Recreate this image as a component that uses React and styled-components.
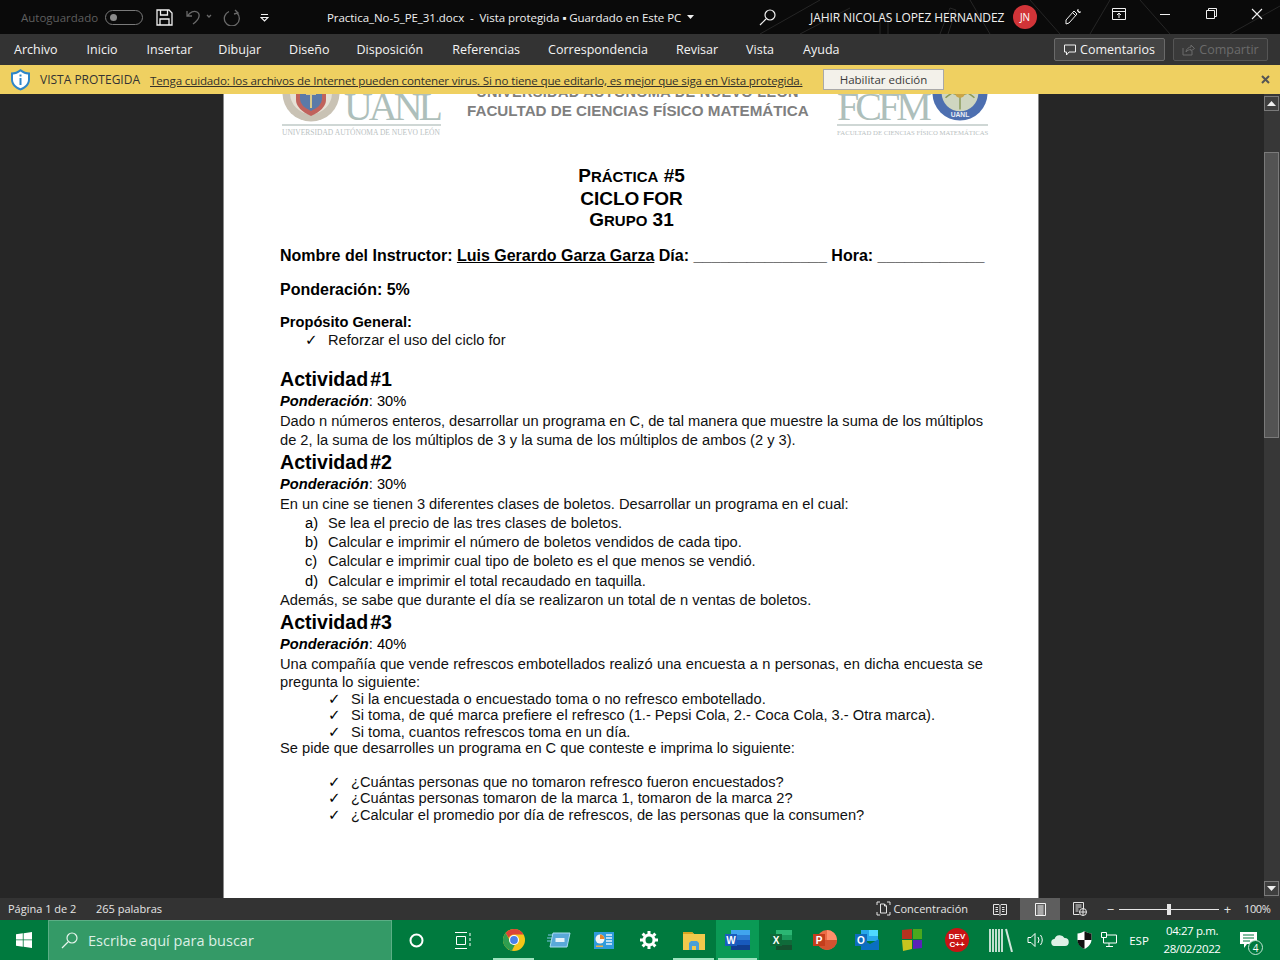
import React from 'react';
import styled, { createGlobalStyle } from 'styled-components';

const Global = createGlobalStyle`
  html, body { margin: 0; padding: 0; background: #262626; }
  body { width: 1280px; height: 960px; overflow: hidden; font-family: "Open Sans", "Liberation Sans", sans-serif; }
  * { box-sizing: border-box; }
`;

const Screen = styled.div`
  width: 1280px;
  height: 960px;
  display: flex;
  flex-direction: column;
`;

/* barra de titulo */
const TitleBar = styled.div`
  position: relative;
  height: 34px;
  flex: none;
  display: flex;
  align-items: center;
  background: #0a0a0a;
  color: #f0f0f0;
  font-size: 11.5px;
  overflow: hidden;
`;
const TitleArt = styled.svg`
  position: absolute;
  right: 0;
  top: 0;
`;
const Quick = styled.div`
  position: relative;
  width: 327px;
  flex: none;
  display: flex;
  align-items: center;
  padding-left: 21px;
`;
const AutoLabel = styled.span`
  width: 84px;
  color: #5f5f5f;
  font-size: 11.5px;
  white-space: nowrap;
`;
const Toggle = styled.span`
  width: 38px;
  height: 15px;
  border: 1px solid #7a7a7a;
  border-radius: 8px;
  display: flex;
  align-items: center;
  padding-left: 4px;
  margin-right: 13px;
  &::before { content: ""; width: 7px; height: 7px; border-radius: 50%; background: #8a8a8a; }
`;
const QuickIcon = styled.span`
  display: flex;
  width: ${p => p.$w}px;
  flex: none;
`;
const DocName = styled.div`
  position: relative;
  width: 432px;
  flex: none;
  display: flex;
  align-items: center;
  gap: 6px;
  white-space: nowrap;
  letter-spacing: -0.05px;
`;
const UserName = styled.span`
  position: relative;
  width: 203px;
  flex: none;
  font-size: 12px;
  letter-spacing: -0.08px;
  white-space: nowrap;
  margin-left: 34px;
`;
const Avatar = styled.span`
  position: relative;
  width: 24px;
  height: 24px;
  flex: none;
  border-radius: 50%;
  background: #d13438;
  color: #fff;
  font-size: 10px;
  display: flex;
  align-items: center;
  justify-content: center;
`;
const WinIcon = styled.span`
  position: relative;
  display: flex;
  justify-content: center;
  flex: none;
  width: 46px;
`;
const WinGroup = styled.div`
  margin-left: 13px;
  display: flex;
  position: relative;
`;

/* pestañas */
const Tabs = styled.div`
  height: 31px;
  flex: none;
  display: flex;
  align-items: center;
  background: #333;
  color: #f3f3f3;
  padding: 0 12px 0 14px;
  font-size: 12.5px;
`;
const Tab = styled.span`
  margin-right: ${p => p.$gap}px;
  white-space: nowrap;
`;
const TabButton = styled.span`
  height: 23px;
  width: ${p => p.$w}px;
  margin-left: ${p => (p.$push ? 'auto' : `${p.$ml || 0}px`)};
  border: 1px solid ${p => (p.$off ? '#555' : '#6a6a6a')};
  border-radius: 2px;
  background: ${p => (p.$off ? '#3a3a3a' : '#444')};
  color: ${p => (p.$off ? '#6b6b6b' : '#f3f3f3')};
  display: flex;
  align-items: center;
  justify-content: center;
  gap: 4px;
  white-space: nowrap;
`;

/* aviso */
const Notice = styled.div`
  height: 29px;
  flex: none;
  display: flex;
  align-items: center;
  background: #efd061;
  color: #333;
  padding-left: 10px;
  font-size: 12px;
`;
const NoticeTitle = styled.span`
  margin-left: 9px;
  width: 110px;
  font-size: 12px;
  white-space: nowrap;
`;
const NoticeLink = styled.span`
  width: 673px;
  padding-top: 1px;
  font-size: 11.6px;
  text-decoration: underline;
  color: #33302a;
  white-space: nowrap;
  letter-spacing: -0.16px;
`;
const EnableButton = styled.span`
  width: 121px;
  height: 21px;
  background: #f3f1ea;
  border: 1px solid #a9a9a9;
  font-size: 11.5px;
  display: flex;
  align-items: center;
  justify-content: center;
  color: #3a3a3a;
`;
const NoticeClose = styled.span`
  margin-left: auto;
  margin-right: 10px;
  display: flex;
`;

/* area del documento */
const Workspace = styled.div`
  flex: 1;
  min-height: 0;
  display: flex;
  background: #262626;
`;
const Canvas = styled.div`
  flex: 1;
  padding-left: 223px;
  overflow: hidden;
`;
const Page = styled.div`
  width: 816px;
  height: 804px;
  background: #fff;
  border-left: 1px solid #8a8a8a;
  border-right: 1px solid #8a8a8a;
  padding-left: 56px;
  overflow: hidden;
  font-family: "Liberation Sans", Arial, sans-serif;
  color: #000;
`;
const Letterhead = styled.div`
  margin-top: -30px;
  height: 74px;
  display: flex;
  width: 708px;
`;
const LogoBlock = styled.div`
  width: ${p => p.$w}px;
  margin-left: ${p => p.$ml}px;
  flex: none;
  display: flex;
  flex-direction: column;
`;
const LogoTop = styled.div`
  height: 58px;
  display: flex;
  align-items: flex-end;
  justify-content: space-between;
`;
const Wordmark = styled.span`
  font-family: "Liberation Serif", serif;
  font-size: 40px;
  line-height: 30px;
  height: 30px;
  letter-spacing: ${p => p.$ls}px;
  margin-right: ${p => p.$mr || 0}px;
  color: #aebfbb;
`;
const LogoRule = styled.div`
  height: 2px;
  margin-top: 2px;
  background: #cfd7d5;
`;
const LogoCaption = styled.div`
  font-family: "Liberation Serif", serif;
  font-size: ${p => p.$size}px;
  line-height: 11px;
  margin-top: 1px;
  color: #b9c1bf;
  white-space: nowrap;
`;
const School = styled.div`
  width: 341px;
  margin-left: 26px;
  flex: none;
  padding-top: 19px;
  text-align: center;
  color: #7f7f7f;
  font-weight: 700;
  font-size: 15.2px;
  line-height: 20px;
  white-space: nowrap;
`;
const SchoolUp = styled.div`
  font-size: 14.5px;
  line-height: 18px;
  letter-spacing: 0.3px;
`;
const TitleBlock = styled.div`
  margin-top: 27px;
  width: 703px;
  text-align: center;
  font-weight: 700;
  font-size: 19px;
  line-height: 21.5px;
`;
const TitleLine = styled.div`
  word-spacing: ${p => p.$ws || 0}px;
`;
const SmallCap = styled.span`
  font-size: 15px;
`;
const InfoLine = styled.div`
  margin-top: ${p => p.$mt}px;
  height: 20px;
  line-height: 20px;
  font-size: 16px;
  font-weight: 700;
  white-space: pre;
`;
const Subhead = styled.div`
  margin-top: 14px;
  height: 17px;
  line-height: 17px;
  font-size: 14.67px;
  font-weight: 700;
`;
const Heading = styled.div`
  margin-top: ${p => p.$mt || 0}px;
  height: 23px;
  line-height: 23px;
  font-size: 19.6px;
  font-weight: 700;
  word-spacing: -3.5px;
`;
const Weight = styled.div`
  height: 21px;
  line-height: 21px;
  font-size: 14.67px;
  & b { font-style: italic; }
`;
const Para = styled.div`
  width: 703px;
  height: ${p => p.$h || 19}px;
  line-height: ${p => p.$h || 19}px;
  font-size: 14.67px;
  color: #111;
  text-align: ${p => (p.$fit ? 'justify' : 'left')};
  text-align-last: ${p => (p.$fit ? 'justify' : 'left')};
  white-space: ${p => (p.$fit ? 'normal' : 'nowrap')};
  word-spacing: ${p => (p.$fit ? '-0.7px' : '0')};
`;
const Item = styled.div`
  display: flex;
  height: ${p => p.$h}px;
  line-height: ${p => p.$h}px;
  padding-left: ${p => p.$indent}px;
  font-size: 14.67px;
  color: #111;
  white-space: nowrap;
`;
const Mark = styled.span`
  width: 23px;
  flex: none;
  font-family: ${p => (p.$check ? '"DejaVu Sans", sans-serif' : 'inherit')};
  font-size: ${p => (p.$check ? '15px' : '14.67px')};
  color: #000;
`;
const Spacer = styled.div`
  height: ${p => p.$h}px;
`;

/* barra de desplazamiento */
const ScrollBar = styled.div`
  width: 16px;
  flex: none;
  background: #373737;
  padding: 2px 1px 2px 0;
  display: flex;
  flex-direction: column;
`;
const ScrollButton = styled.div`
  height: 15px;
  border: 1px solid #7a7a7a;
  background: #3f3f3f;
  display: flex;
  align-items: center;
  justify-content: center;
`;
const ScrollThumb = styled.div`
  height: 286px;
  margin-top: 41px;
  margin-bottom: auto;
  border: 1px solid #7a7a7a;
  background: #535353;
`;

/* barra de estado */
const StatusBar = styled.div`
  height: 22px;
  flex: none;
  display: flex;
  align-items: center;
  background: #333;
  color: #e6e6e6;
  font-size: 11px;
  padding-left: 8px;
`;
const StatusText = styled.span`
  width: ${p => p.$w}px;
  flex: none;
  padding-bottom: 1px;
  white-space: nowrap;
`;
const FocusButton = styled.span`
  margin-left: auto;
  display: flex;
  align-items: center;
  gap: 3px;
  margin-right: 12px;
  padding-bottom: 1px;
  white-space: nowrap;
`;
const ViewButton = styled.span`
  width: 40px;
  height: 22px;
  display: flex;
  align-items: center;
  justify-content: center;
  background: ${p => (p.$on ? '#5e5e5e' : 'transparent')};
`;
const ZoomBox = styled.div`
  display: flex;
  align-items: center;
  margin-left: 6px;
  gap: 4px;
`;
const ZoomTrack = styled.span`
  position: relative;
  width: 100px;
  height: 1px;
  background: #e6e6e6;
  &::after {
    content: "";
    position: absolute;
    left: 48px;
    top: -5px;
    width: 4px;
    height: 11px;
    background: #e6e6e6;
  }
`;
const ZoomSign = styled.span`
  font-size: 13px;
  line-height: 13px;
  width: 9px;
  text-align: center;
`;
const ZoomValue = styled.span`
  margin-left: 12px;
  width: 36px;
  padding-bottom: 1px;
  letter-spacing: -0.4px;
  white-space: nowrap;
`;

/* barra de tareas */
const Taskbar = styled.div`
  height: 40px;
  flex: none;
  display: flex;
  align-items: stretch;
  background: #007a3e;
  color: #fff;
`;
const StartButton = styled.span`
  width: 48px;
  flex: none;
  display: flex;
  align-items: center;
  justify-content: center;
`;
const SearchBox = styled.div`
  width: 344px;
  flex: none;
  background: #349a67;
  border: 1px solid #5bae85;
  border-bottom: none;
  display: flex;
  align-items: center;
  padding-left: 12px;
  gap: 10px;
  color: #dcefe5;
  font-size: 14.5px;
  white-space: nowrap;
`;
const TaskItem = styled.span`
  position: relative;
  width: ${p => p.$w || 44}px;
  flex: none;
  display: flex;
  align-items: center;
  justify-content: center;
  padding-right: ${p => p.$pr || 0}px;
  background: ${p => (p.$active ? '#0a9a55' : 'transparent')};
  ${p => p.$open && `
    &::after {
      content: "";
      position: absolute;
      left: 2px;
      right: 2px;
      bottom: 0;
      height: 2px;
      background: #9fe3bf;
    }
  `}
`;
const Tray = styled.div`
  display: flex;
  align-items: center;
  margin-left: auto;
  padding-right: 12px;
  font-size: 11.5px;
`;
const TrayIcon = styled.span`
  width: ${p => p.$w || 24}px;
  display: flex;
  justify-content: center;
  flex: none;
`;
const Clock = styled.div`
  width: 70px;
  margin-left: 1px;
  text-align: center;
  font-size: 11.5px;
  line-height: 18px;
  letter-spacing: -0.4px;
  white-space: nowrap;
`;
const NotifyWrap = styled.span`
  position: relative;
  width: 40px;
  display: flex;
  justify-content: center;
  margin-left: 1px;
`;
const NotifyBadge = styled.span`
  position: absolute;
  left: 20px;
  top: 8px;
  width: 15px;
  height: 15px;
  border-radius: 50%;
  border: 1px solid #bfe5d2;
  background: #007a3e;
  font-size: 10px;
  display: flex;
  align-items: center;
  justify-content: center;
`;

const Stroke = ({ w = 16, h = 16, vb, color = '#f0f0f0', sw = 1, children }) => (
  <svg width={w} height={h} viewBox={vb || `0 0 ${w} ${h}`} fill="none" stroke={color} strokeWidth={sw}>{children}</svg>
);

const UanlCrest = () => (
  <svg width="58" height="58" viewBox="0 0 58 58">
    <circle cx="29" cy="29" r="28.5" fill="#c9c2b4" />
    <circle cx="29" cy="29" r="21" fill="#e6e1d6" />
    <path d="M14 22h30v14q0 9-15 16q-15-7-15-16z" fill="#c0625c" />
    <path d="M18 22h22v13q0 7-11 12q-11-5-11-12z" fill="#5b7aa8" />
    <path d="M29 24v20M24 30h10" stroke="#d9c98a" strokeWidth="2" />
  </svg>
);

const FcfmCrest = () => (
  <svg width="56" height="58" viewBox="0 0 58 58">
    <circle cx="29" cy="29" r="28.5" fill="#4d6fb0" />
    <circle cx="29" cy="29" r="19" fill="#cfd6c0" />
    <path d="M14 24q15 14 30 0M14 34q15-14 30 0M29 12v34" stroke="#8a9a58" strokeWidth="1.5" fill="none" />
    <circle cx="29" cy="29" r="5" fill="#c9a548" />
    <text x="29" y="54" textAnchor="middle" fontSize="7" fontWeight="700" fill="#e8edf5" fontFamily="Liberation Sans">UANL</text>
  </svg>
);

const Chrome = () => (
  <svg width="22" height="22" viewBox="0 0 22 22">
    <circle cx="11" cy="11" r="11" fill="#f5c518" />
    <path d="M11 0a11 11 0 0 1 9.6 5.5H11a5.5 5.5 0 0 0-5.2 3.6L2.6 3.9A11 11 0 0 1 11 0z" fill="#db4437" />
    <path d="M2.6 3.9l4.8 8.6a4.5 4.5 0 0 0 4.6 3L8.9 21.8A11 11 0 0 1 2.6 3.9z" fill="#2f9e50" />
    <circle cx="11" cy="11" r="5" fill="#fff" />
    <circle cx="11" cy="11" r="3.9" fill="#4a80e8" />
  </svg>
);
const Remote = () => (
  <svg width="24" height="16" viewBox="0 0 24 16">
    <path d="M1 3h5M0 6h5M0 9h4" stroke="#7cc6e8" strokeWidth="1" />
    <path d="M6 1h17l-3 14H3z" fill="#5aa9d8" stroke="#a9dcf2" />
    <rect x="8.5" y="6" width="9" height="4" fill="#e6f2f8" />
  </svg>
);
const Panel = () => (
  <svg width="20" height="17" viewBox="0 0 20 17">
    <rect width="20" height="17" fill="#2f9bdc" />
    <circle cx="6" cy="7" r="4.5" fill="#f4f4f4" />
    <path d="M6 7V2.5A4.5 4.5 0 0 1 10.5 7z" fill="#e8862a" />
    <path d="M12 3h6M12 6h6M12 9h6M12 12h6" stroke="#e6f4fc" strokeWidth="1.5" />
    <rect x="2" y="13.5" width="7" height="1.5" fill="#f0b040" />
  </svg>
);
const Gear = () => (
  <svg width="18" height="18" viewBox="0 0 18 18" fill="none" stroke="#fff">
    <circle cx="9" cy="9" r="5" strokeWidth="3" />
    <path d="M9 0v3M9 15v3M0 9h3M15 9h3M2.6 2.6l2.2 2.2M13.2 13.2l2.2 2.2M2.6 15.4l2.2-2.2M13.2 4.8l2.2-2.2" strokeWidth="3" />
  </svg>
);
const Folder = () => (
  <svg width="22" height="19" viewBox="0 0 22 19">
    <path d="M0 1h9l2 2h11v16H0z" fill="#f2c94c" />
    <path d="M0 1h9l2 2H0z" fill="#d9a520" />
    <path d="M6 19v-7l2-2h6l2 2v7h-3v-4H9v4z" fill="#4a9fd8" />
  </svg>
);
const Word = () => (
  <svg width="25" height="20" viewBox="0 0 25 20">
    <rect x="6" y="0" width="19" height="5" fill="#41a5ee" />
    <rect x="6" y="5" width="19" height="5" fill="#2b7cd3" />
    <rect x="6" y="10" width="19" height="5" fill="#185abd" />
    <rect x="6" y="15" width="19" height="5" fill="#103f91" />
    <rect x="0" y="4" width="12" height="12" fill="#1a5dbe" />
    <text x="6" y="14" textAnchor="middle" fontSize="10" fontWeight="700" fill="#fff" fontFamily="Liberation Sans">W</text>
  </svg>
);
const Excel = () => (
  <svg width="22" height="20" viewBox="0 0 22 20">
    <rect x="6" y="0" width="16" height="5" fill="#2bb673" />
    <rect x="6" y="5" width="16" height="5" fill="#1a9a5c" />
    <rect x="6" y="10" width="16" height="5" fill="#0f6b3a" />
    <rect x="6" y="15" width="16" height="5" fill="#14512f" />
    <rect x="0" y="4" width="12" height="12" fill="#0d6b39" />
    <text x="6" y="14" textAnchor="middle" fontSize="10" fontWeight="700" fill="#fff" fontFamily="Liberation Sans">X</text>
  </svg>
);
const Powerpoint = () => (
  <svg width="24" height="20" viewBox="0 0 24 20">
    <circle cx="14" cy="10" r="10" fill="#ed6c47" />
    <path d="M14 0a10 10 0 0 1 10 10H14z" fill="#ff8f6b" />
    <path d="M4 10h20a10 10 0 0 1-20 0z" fill="#d35230" />
    <rect x="0" y="4" width="12" height="12" fill="#c43e1c" />
    <text x="6" y="14" textAnchor="middle" fontSize="10" fontWeight="700" fill="#fff" fontFamily="Liberation Sans">P</text>
  </svg>
);
const Outlook = () => (
  <svg width="24" height="20" viewBox="0 0 24 20">
    <rect x="6" y="0" width="17" height="11" fill="#28a8ea" />
    <rect x="14" y="0" width="9" height="6" fill="#50d9ff" />
    <path d="M6 9l9 5 9-5v11H6z" fill="#0a6fc2" />
    <rect x="0" y="4" width="12" height="12" fill="#0f6cbd" />
    <text x="6" y="14" textAnchor="middle" fontSize="10" fontWeight="700" fill="#fff" fontFamily="Liberation Sans">O</text>
  </svg>
);
const Cubes = () => (
  <svg width="22" height="24" viewBox="0 0 22 24">
    <path d="M1 2l10-1v10H1z" fill="#b8321f" />
    <path d="M12 1h9v10h-9z" fill="#4aa81e" />
    <path d="M1 12h10v9l-9 2z" fill="#c8c41e" />
    <path d="M12 12h9v8l-9 1z" fill="#5b22b8" />
  </svg>
);
const DevCpp = () => (
  <svg width="24" height="24" viewBox="0 0 24 24">
    <circle cx="12" cy="12" r="12" fill="#c81414" />
    <text x="12" y="11" textAnchor="middle" fontSize="8" fontWeight="700" fill="#fff" fontFamily="Liberation Sans">DEV</text>
    <text x="12" y="19" textAnchor="middle" fontSize="8" fontWeight="700" fill="#fff" fontFamily="Liberation Sans">C++</text>
  </svg>
);
const Library = () => (
  <svg width="24" height="24" viewBox="0 0 24 24" fill="none" stroke="#fff" strokeWidth="1.5">
    <path d="M1 1v23M4 1v23M7 1v23M10 1v23M13 1v23" />
    <path d="M17 1l6 23" stroke="#cfe6da" strokeWidth="2" />
  </svg>
);

const letters = [
  ['a)', 'Se lea el precio de las tres clases de boletos.'],
  ['b)', 'Calcular e imprimir el número de boletos vendidos de cada tipo.'],
  ['c)', 'Calcular e imprimir cual tipo de boleto es el que menos se vendió.'],
  ['d)', 'Calcular e imprimir el total recaudado en taquilla.'],
];
const survey = [
  'Si la encuestada o encuestado toma o no refresco embotellado.',
  'Si toma, de qué marca prefiere el refresco (1.- Pepsi Cola, 2.- Coca Cola, 3.- Otra marca).',
  'Si toma, cuantos refrescos toma en un día.',
];
const asks = [
  '¿Cuántas personas que no tomaron refresco fueron encuestados?',
  '¿Cuántas personas tomaron de la marca 1, tomaron de la marca 2?',
  '¿Calcular el promedio por día de refrescos, de las personas que la consumen?',
];

const App = () => (
  <Screen>
    <Global />
    <TitleBar>
      <TitleArt width="520" height="34" viewBox="0 0 520 34" fill="none" stroke="#262626">
        <path d="M0 34L60 0M40 34L90 8M230 34L210 0M300 34L270 0M330 34L350 0M410 34L380 0M470 34L520 6M180 34l10-26 6 2-8 24M120 34V14h8v20" />
      </TitleArt>
      <Quick>
        <AutoLabel>Autoguardado</AutoLabel>
        <Toggle />
        <QuickIcon $w={30}>
          <Stroke w={17} h={17} sw={1.3}>
            <path d="M1 1h12l3 3v12H1zM4.5 1v5h7V1M4 16v-6h9v6" />
          </Stroke>
        </QuickIcon>
        <QuickIcon $w={37}>
          <Stroke w={26} h={16} color="#6a6a6a" sw={1.3}>
            <path d="M1 2v5h5M1.5 7C4 3 8 1.5 11 3c3.5 2 3 7-4 12M21 6l2 2 2-2" />
          </Stroke>
        </QuickIcon>
        <QuickIcon $w={37}>
          <Stroke w={18} h={17} color="#6a6a6a" sw={1.3}>
            <path d="M12 1l3 3-4 1M14 4A7.5 7.5 0 1 1 6 2.5" />
          </Stroke>
        </QuickIcon>
        <QuickIcon $w={10}>
          <Stroke w={9} h={9} sw={1.2}>
            <path d="M1 1.5h7M1 4.5h7L4.5 8z" />
          </Stroke>
        </QuickIcon>
      </Quick>
      <DocName>
        <span>Practica_No-5_PE_31.docx&nbsp; - &nbsp;Vista protegida ▪ Guardado en Este PC</span>
        <Stroke w={7} h={5}><path d="M0 0h7L3.5 4z" fill="#f0f0f0" stroke="none" /></Stroke>
      </DocName>
      <Stroke w={17} h={17} sw={1.2}><path d="M1 16l6-6" /><circle cx="11" cy="6" r="5" /></Stroke>
      <UserName>JAHIR NICOLAS LOPEZ HERNANDEZ</UserName>
      <Avatar>JN</Avatar>
      <WinGroup>
        <WinIcon>
          <Stroke w={18} h={18}><path d="M2 12l8-9 3 3-8 9-3 1zM13 2l3 3M9 5l3 3M14 1v3h3" /></Stroke>
        </WinIcon>
        <WinIcon>
          <Stroke w={14} h={12}><path d="M.5.5h13v11H.5zM.5 3.5h13M7 10V5M5 7l2-2 2 2" /></Stroke>
        </WinIcon>
        <WinIcon>
          <Stroke w={12} h={12}><path d="M1 6.5h10" /></Stroke>
        </WinIcon>
        <WinIcon>
          <Stroke w={11} h={11}><path d="M.5 2.5h8v8h-8zM2.5 2.5v-2h8v8h-2" /></Stroke>
        </WinIcon>
        <WinIcon>
          <Stroke w={12} h={12} sw={1.1}><path d="M1 1l10 10M11 1L1 11" /></Stroke>
        </WinIcon>
      </WinGroup>
    </TitleBar>

    <Tabs>
      <Tab $gap={29}>Archivo</Tab>
      <Tab $gap={29}>Inicio</Tab>
      <Tab $gap={26}>Insertar</Tab>
      <Tab $gap={28}>Dibujar</Tab>
      <Tab $gap={27}>Diseño</Tab>
      <Tab $gap={29}>Disposición</Tab>
      <Tab $gap={28}>Referencias</Tab>
      <Tab $gap={28}>Correspondencia</Tab>
      <Tab $gap={28}>Revisar</Tab>
      <Tab $gap={29}>Vista</Tab>
      <Tab $gap={0}>Ayuda</Tab>
      <TabButton $w={111} $push>
        <Stroke w={12} h={12}><path d="M.5 1h11v7H5l-2.5 3V8H.5z" /></Stroke>
        Comentarios
      </TabButton>
      <TabButton $w={95} $ml={8} $off>
        <Stroke w={13} h={12} color="#6b6b6b"><path d="M1 4v7h9V7M4 8c0-3 3-5 5-5V1l3.5 3.5L9 7V5.5C7 5.5 5 6.5 4 8z" /></Stroke>
        Compartir
      </TabButton>
    </Tabs>

    <Notice>
      <svg width="21" height="23" viewBox="0 0 21 23">
        <path d="M10.5 1c3 2.5 6 3.5 9.5 3.5v7c0 5-4 9-9.5 11C5 20.5 1 16.5 1 11.5v-7C4.5 4.5 7.5 3.5 10.5 1z" fill="#2e86c8" />
        <path d="M10.5 3.5c2.5 2 5 3 7.5 3v5c0 3.8-3 7-7.5 8.8C6 18.5 3 15.3 3 11.5v-5c2.5 0 5-1 7.5-3z" fill="#fff" />
        <path d="M9.5 6.5h2v2h-2zM9.5 10h2v7h-2z" fill="#2e86c8" />
      </svg>
      <NoticeTitle>VISTA PROTEGIDA</NoticeTitle>
      <NoticeLink>Tenga cuidado: los archivos de Internet pueden contener virus. Si no tiene que editarlo, es mejor que siga en Vista protegida.</NoticeLink>
      <EnableButton>Habilitar edición</EnableButton>
      <NoticeClose>
        <Stroke w={9} h={9} color="#555" sw={2}><path d="M1 1l7 7M8 1L1 8" /></Stroke>
      </NoticeClose>
    </Notice>

    <Workspace>
      <Canvas>
        <Page>
          <Letterhead>
            <LogoBlock $w={159} $ml={2}>
              <LogoTop>
                <UanlCrest />
                <Wordmark $ls={-4} $mr={2}>UANL</Wordmark>
              </LogoTop>
              <LogoRule />
              <LogoCaption $size={7.5}>UNIVERSIDAD AUTÓNOMA DE NUEVO LEÓN</LogoCaption>
            </LogoBlock>
            <School>
              <SchoolUp>UNIVERSIDAD AUTÓNOMA DE NUEVO LEÓN</SchoolUp>
              FACULTAD DE CIENCIAS FÍSICO MATEMÁTICA
            </School>
            <LogoBlock $w={151} $ml={29}>
              <LogoTop>
                <Wordmark $ls={-4}>FCFM</Wordmark>
                <FcfmCrest />
              </LogoTop>
              <LogoRule />
              <LogoCaption $size={6.75}>FACULTAD DE CIENCIAS FÍSICO MATEMÁTICAS</LogoCaption>
            </LogoBlock>
          </Letterhead>

          <TitleBlock>
            <TitleLine>P<SmallCap>RÁCTICA</SmallCap> #5</TitleLine>
            <TitleLine $ws={-2}>CICLO FOR</TitleLine>
            <TitleLine>G<SmallCap>RUPO</SmallCap> 31</TitleLine>
          </TitleBlock>

          <InfoLine $mt={14}>
            Nombre del Instructor: <u>Luis Gerardo Garza Garza</u> Día: _______________ Hora: ____________
          </InfoLine>
          <InfoLine $mt={14}>Ponderación: 5%</InfoLine>

          <Subhead>Propósito General:</Subhead>
          <Item $h={18} $indent={25}><Mark $check>✓</Mark>Reforzar el uso del ciclo for</Item>

          <Heading $mt={19}>Actividad #1</Heading>
          <Weight><b>Ponderación</b>: 30%</Weight>
          <Para $fit>Dado n números enteros, desarrollar un programa en C, de tal manera que muestre la suma de los múltiplos</Para>
          <Para>de 2, la suma de los múltiplos de 3 y la suma de los múltiplos de ambos (2 y 3).</Para>

          <Heading $mt={1}>Actividad #2</Heading>
          <Weight><b>Ponderación</b>: 30%</Weight>
          <Para>En un cine se tienen 3 diferentes clases de boletos. Desarrollar un programa en el cual:</Para>
          {letters.map(([mark, text]) => (
            <Item key={mark} $h={19.4} $indent={25}><Mark>{mark}</Mark>{text}</Item>
          ))}
          <Para>Además, se sabe que durante el día se realizaron un total de n ventas de boletos.</Para>

          <Heading $mt={1}>Actividad #3</Heading>
          <Weight><b>Ponderación</b>: 40%</Weight>
          <Para $fit>Una compañía que vende refrescos embotellados realizó una encuesta a n personas, en dicha encuesta se</Para>
          <Para $h={16.5}>pregunta lo siguiente:</Para>
          {survey.map(text => (
            <Item key={text} $h={16.6} $indent={48}><Mark $check>✓</Mark>{text}</Item>
          ))}
          <Para $h={16.6}>Se pide que desarrolles un programa en C que conteste e imprima lo siguiente:</Para>
          <Spacer $h={16.6} />
          {asks.map(text => (
            <Item key={text} $h={16.8} $indent={48}><Mark $check>✓</Mark>{text}</Item>
          ))}
        </Page>
      </Canvas>
      <ScrollBar>
        <ScrollButton><Stroke w={9} h={5}><path d="M0 5L4.5 0 9 5z" fill="#eee" stroke="none" /></Stroke></ScrollButton>
        <ScrollThumb />
        <ScrollButton><Stroke w={9} h={5}><path d="M0 0L4.5 5 9 0z" fill="#eee" stroke="none" /></Stroke></ScrollButton>
      </ScrollBar>
    </Workspace>

    <StatusBar>
      <StatusText $w={88}>Página 1 de 2</StatusText>
      <StatusText $w={80}>265 palabras</StatusText>
      <FocusButton>
        <Stroke w={15} h={15} color="#e6e6e6">
          <path d="M1 4V1h3M11 1h3v3M14 11v3h-3M4 14H1v-3M4.5 3h4l2 2v7h-6zM8.5 3v2h2" />
        </Stroke>
        Concentración
      </FocusButton>
      <ViewButton>
        <Stroke w={14} h={13} color="#e6e6e6"><path d="M.5 1.5H6l1 1 1-1h5.5v10H8l-1 1-1-1H.5zM7 2.5v9M2.5 4.5H5M2.5 6.5H5M2.5 8.5H5M9 4.5h2.5M9 6.5h2.5M9 8.5h2.5" /></Stroke>
      </ViewButton>
      <ViewButton $on>
        <Stroke w={11} h={13} color="#f3f3f3"><path d="M.5.5h10v12H.5zM2.5 3h6M2.5 5h6M2.5 7h6M2.5 9h6M2.5 11h6" /></Stroke>
      </ViewButton>
      <ViewButton>
        <Stroke w={14} h={14} color="#e6e6e6"><path d="M.5.5h10v7M.5.5v12h6M2.5 3h6M2.5 5h6M2.5 7h3M2.5 9h3" /><circle cx="10" cy="10" r="3.5" /><path d="M6.5 10h7M10 6.5v7" /></Stroke>
      </ViewButton>
      <ZoomBox>
        <ZoomSign>−</ZoomSign>
        <ZoomTrack />
        <ZoomSign>+</ZoomSign>
      </ZoomBox>
      <ZoomValue>100%</ZoomValue>
    </StatusBar>

    <Taskbar>
      <StartButton>
        <svg width="16" height="16" viewBox="0 0 16 16" fill="#fff">
          <path d="M0 2.3L6.8 1.3V7.5H0zM7.6 1.2L16 0V7.5H7.6zM0 8.3H6.8V14.7L0 13.7zM7.6 8.3H16V16L7.6 14.8z" />
        </svg>
      </StartButton>
      <SearchBox>
        <Stroke w={17} h={17} color="#e6f4ec" sw={1.2}><path d="M1 16l6-6" /><circle cx="11" cy="6" r="5" /></Stroke>
        Escribe aquí para buscar
      </SearchBox>
      <TaskItem $w={48}>
        <Stroke w={15} h={15} color="#fff" sw={2}><circle cx="7.5" cy="7.5" r="6" /></Stroke>
      </TaskItem>
      <TaskItem $w={51} $pr={5}>
        <Stroke w={16} h={17} color="#fff"><path d="M0 .5h12M0 16.5h12M1.5 4.5h9v8h-9zM15 1v3M15 6v3M15 11v3" /></Stroke>
      </TaskItem>
      <TaskItem $w={45} $open><Chrome /></TaskItem>
      <TaskItem $w={45}><Remote /></TaskItem>
      <TaskItem $w={45}><Panel /></TaskItem>
      <TaskItem $w={45}><Gear /></TaskItem>
      <TaskItem $w={45} $open><Folder /></TaskItem>
      <TaskItem $w={43} $open $active><Word /></TaskItem>
      <TaskItem><Excel /></TaskItem>
      <TaskItem $w={43}><Powerpoint /></TaskItem>
      <TaskItem $w={42}><Outlook /></TaskItem>
      <TaskItem $w={47}><Cubes /></TaskItem>
      <TaskItem><DevCpp /></TaskItem>
      <TaskItem><Library /></TaskItem>
      <Tray>
        <TrayIcon>
          <Stroke w={18} h={16} color="#fff"><path d="M1 5.5h3l4-4v13l-4-4H1zM11 5q2 3 0 6M13.5 3q3.5 5 0 10" /></Stroke>
        </TrayIcon>
        <TrayIcon>
          <svg width="18" height="11" viewBox="0 0 18 11"><path d="M4 11a3.5 3.5 0 0 1-.5-7A5.5 5.5 0 0 1 13.5 3 4 4 0 0 1 14 11z" fill="#dff0e7" /></svg>
        </TrayIcon>
        <TrayIcon>
          <svg width="15" height="18" viewBox="0 0 15 18">
            <path d="M7.5 0c2 1.5 4.5 2.5 7 2.5v6c0 4-3 7.5-7 9.5-4-2-7-5.5-7-9.5v-6c2.5 0 5-1 7-2.5z" fill="#fff" />
            <path d="M7.5 0v9h7v-6.500c-2.500 0-5-1-7-2.500zM7.500 9H.5c0 4 3 7.500 7 9z" fill="#111" />
          </svg>
        </TrayIcon>
        <TrayIcon $w={26}>
          <Stroke w={16} h={16} color="#fff"><path d="M.5.5h5v5h-5zM5.5 3h10v8h-13V5.5M8 11v3M5 14.5h7" /></Stroke>
        </TrayIcon>
        <TrayIcon $w={34}>ESP</TrayIcon>
        <Clock>
          <div>04:27 p.m.</div>
          <div>28/02/2022</div>
        </Clock>
        <NotifyWrap>
          <svg width="17" height="16" viewBox="0 0 17 16">
            <path d="M0 0h17v12H7l-3 4v-4H0z" fill="#fff" />
            <path d="M3 3h11M3 6h11M3 9h7" stroke="#007a3e" />
          </svg>
          <NotifyBadge>4</NotifyBadge>
        </NotifyWrap>
      </Tray>
    </Taskbar>
  </Screen>
);

export default App;
